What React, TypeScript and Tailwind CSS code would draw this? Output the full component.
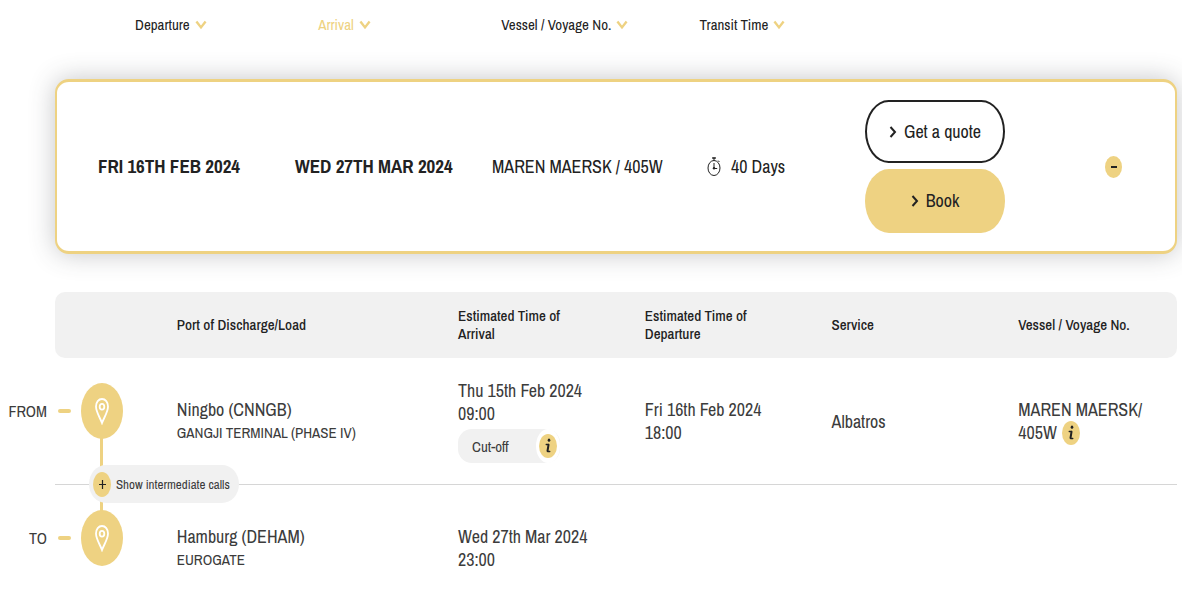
const sortColumns = [
  { label: "Departure", active: false },
  { label: "Arrival", active: true },
  { label: "Vessel / Voyage No.", active: false },
  { label: "Transit Time", active: false },
];

const tableHeaders = [
  "Port of Discharge/Load",
  "Estimated Time of Arrival",
  "Estimated Time of Departure",
  "Service",
  "Vessel / Voyage No.",
];

const ChevronDown = () => (
  <svg viewBox="0 0 12 10" className="h-[10px] w-3" fill="none" stroke="#eed282" strokeWidth="2.4">
    <path d="M1.4 1.6 6 7.4l4.6-5.8" />
  </svg>
);

const ChevronRight = () => (
  <svg viewBox="0 0 8 12" className="h-3 w-2" fill="none" stroke="currentColor" strokeWidth="2">
    <path d="M1.5 1 6 6l-4.5 5" />
  </svg>
);

const Stopwatch = () => (
  <svg viewBox="0 0 14 20" className="h-5 w-[14px]" fill="none" stroke="currentColor">
    <ellipse cx="7" cy="11" rx="6" ry="7.500" strokeWidth="1" />
    <path d="M5.200 1h3.600" strokeWidth="1.600" />
    <path d="M7 1v2.500M7 6v5.500h3.200M11.200 3.600l1.200 1.400" strokeWidth="1" />
    <ellipse cx="7" cy="11.200" rx="1.200" ry="1.300" fill="currentColor" stroke="none" />
  </svg>
);

const PinMarker = () => (
  <div className="flex h-14 w-[42px] items-center justify-center rounded-[50%] bg-[#eed282]">
    <svg viewBox="0 0 14 28" className="h-7 w-[14px]" fill="none" stroke="#fff" strokeWidth="1.8">
      <path d="M7 26C5 20.5 1 15 1 9.500 1 5 3.600 2 7 2s6 3 6 7.500C13 15 9 20.5 7 26Z" />
      <ellipse cx="7" cy="9.800" rx="2.300" ry="2.900" />
    </svg>
  </div>
);

const InfoIcon = () => (
  <svg viewBox="0 0 8 16" className="h-4 w-2" fill="none" stroke="#222" strokeLinecap="round">
    <ellipse cx="5" cy="2.200" rx="1.300" ry="1.600" fill="#222" stroke="none" />
    <path d="M2.200 6.500h2.200" strokeWidth="1.300" />
    <path d="M4.500 6.800 3.500 13" strokeWidth="2" />
    <path d="M3.600 13.500h2.200" strokeWidth="1.300" />
  </svg>
);

const InfoButton = ({ label }: { label: string }) => (
  <button
    aria-label={label}
    className="inline-flex h-6 w-[18px] items-center justify-center rounded-[50%] bg-[#eed282]"
  >
    <InfoIcon />
  </button>
);

const SortBar = () => (
  <div className="grid grid-cols-[183fr_183fr_198fr_482fr] pt-4 pl-[135px]">
    {sortColumns.map(({ label, active }) => (
      <button
        key={label}
        className={`flex items-center gap-[5px] text-[15px] leading-[18px] ${
          active ? "text-[#eed282]" : "text-[#222]"
        }`}
      >
        {label}
        <ChevronDown />
      </button>
    ))}
  </div>
);

const SailingCard = () => (
  <section className="mt-[45px] mr-[5px] ml-[55px] grid grid-cols-[197fr_197fr_215fr_158fr_140fr_117fr] items-center rounded-[14px] border-x-2 border-y-[3px] border-[#eed282] bg-white py-[18px] pr-[53px] pl-[41px] text-lg whitespace-nowrap shadow-[0_0_26px_rgba(60,64,70,0.3)]">
    <strong className="text-[19px] font-bold">FRI 16TH FEB 2024</strong>
    <strong className="text-[19px] font-bold">WED 27TH MAR 2024</strong>
    <span>MAREN MAERSK / 405W</span>
    <span className="flex items-center gap-[10px]">
      <Stopwatch />
      40 Days
    </span>
    <div className="flex flex-col gap-[6px]">
      <button className="flex h-[63px] items-center justify-center gap-[7px] rounded-[24px/32px] border-2 border-[#222]">
        <ChevronRight />
        Get a quote
      </button>
      <button className="flex h-16 items-center justify-center gap-[7px] rounded-[24px/32px] bg-[#eed282]">
        <ChevronRight />
        Book
      </button>
    </div>
    <button
      aria-label="Hide details"
      className="flex h-[22px] w-[17px] items-center justify-center justify-self-end rounded-[50%] bg-[#eed282]"
    >
      <span className="h-[2px] w-[6px] bg-[#222]" />
    </button>
  </section>
);

const RouteTable = () => (
  <table className="mt-[38px] w-full table-fixed border-separate border-spacing-0 text-left text-lg leading-[23px] text-[#3c3c3c]">
    <colgroup>
      <col className="w-[55px]" />
      <col className="w-[10.3%]" />
      <col className="w-[23.8%]" />
      <col className="w-[15.8%]" />
      <col className="w-[15.8%]" />
      <col className="w-[15.8%]" />
      <col />
      <col className="w-[5px]" />
    </colgroup>
    <thead>
      <tr className="h-[66px] text-[15px] leading-[18px] text-[#222]">
        <td />
        <td className="rounded-l-[10px] bg-[#f1f1f1]" />
        {tableHeaders.map((header) => (
          <th
            key={header}
            scope="col"
            className="bg-[#f1f1f1] pr-12 font-medium last-of-type:rounded-r-[10px] last-of-type:pr-0"
          >
            {header}
          </th>
        ))}
        <td />
      </tr>
    </thead>
    <tbody>
      <tr className="h-[127px]">
        <th scope="row" className="pt-[42px] pr-2 text-right align-top text-base leading-[23px] font-normal">
          FROM
        </th>
        <td className="relative border-b border-[#d6d6d6] pt-[25px] align-top">
          <div className="flex items-center gap-[10px] pl-[3px]">
            <span className="h-1 w-[13px] rounded-xs bg-[#eed282]" />
            <PinMarker />
          </div>
          <span className="absolute top-20 left-[45px] h-[76px] w-[3px] bg-[#eed282]" />
          <button className="absolute top-[107px] left-[34px] flex h-[38px] items-center gap-[5px] rounded-[17px/19px] bg-[#f1f1f1] pr-[9px] pl-1 text-[13px] whitespace-nowrap">
            <span className="flex h-[25px] w-[18px] items-center justify-center rounded-[50%] bg-[#eed282]">
              <svg viewBox="0 0 7 9" className="h-[9px] w-[7px]" stroke="#222" strokeWidth="1.200">
                <path d="M3.500 0v9M0 4.500h7" />
              </svg>
            </span>
            Show intermediate calls
          </button>
        </td>
        <td className="border-b border-[#d6d6d6]">
          Ningbo (CNNGB)
          <span className="block text-[15px]">GANGJI TERMINAL (PHASE IV)</span>
        </td>
        <td className="border-b border-[#d6d6d6]">
          Thu 15th Feb 2024
          <br />
          09:00
          <div className="mt-1 flex h-[34px] w-[102px] items-center justify-between rounded-[14px] bg-[#f1f1f1] pl-[14px] text-[15px]">
            Cut-off
            <span className="flex h-[34px] w-6 items-center justify-center rounded-[50%] bg-white">
              <InfoButton label="Cut-off information" />
            </span>
          </div>
        </td>
        <td className="border-b border-[#d6d6d6]">
          Fri 16th Feb 2024
          <br />
          18:00
        </td>
        <td className="border-b border-[#d6d6d6]">Albatros</td>
        <td className="border-b border-[#d6d6d6] whitespace-nowrap">
          MAREN MAERSK/
          <br />
          <span className="flex items-center gap-[5px]">
            405W <InfoButton label="Vessel information" />
          </span>
        </td>
        <td />
      </tr>
      <tr>
        <th scope="row" className="pt-[42px] pr-2 text-right align-top text-base leading-[23px] font-normal">
          TO
        </th>
        <td className="pt-[25px] align-top">
          <div className="flex items-center gap-[10px] pl-[3px]">
            <span className="h-1 w-[13px] rounded-xs bg-[#eed282]" />
            <PinMarker />
          </div>
        </td>
        <td className="pt-10 align-top">
          Hamburg (DEHAM)
          <span className="block text-[15px]">EUROGATE</span>
        </td>
        <td className="pt-10 align-top">
          Wed 27th Mar 2024
          <br />
          23:00
        </td>
        <td />
        <td />
        <td />
        <td />
      </tr>
    </tbody>
  </table>
);

const App = () => {
  return (
    <main className="overflow-x-hidden bg-white font-['Archivo_Narrow','Liberation_Sans_Narrow','Liberation_Sans',sans-serif] text-[#222]">
      <SortBar />
      <SailingCard />
      <RouteTable />
    </main>
  );
};

export default App;
